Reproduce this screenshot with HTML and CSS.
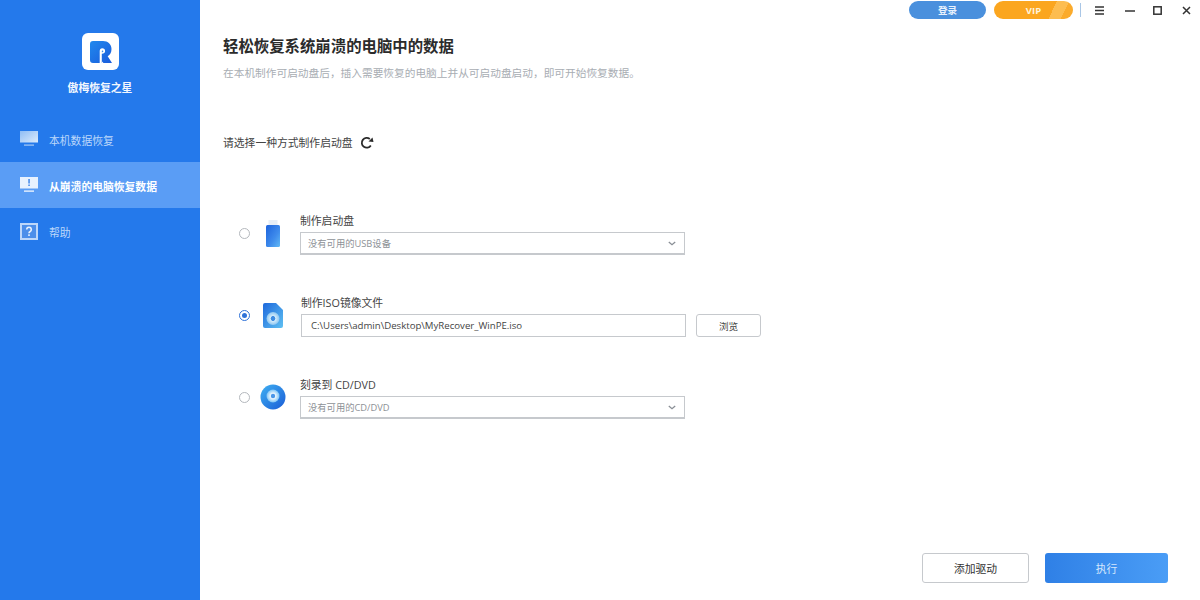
FILE: index.html
```html
<!DOCTYPE html>
<html lang="zh-CN">
<head>
<meta charset="utf-8">
<title>傲梅恢复之星</title>
<link rel="stylesheet" href="styles.css">
</head>
<body>
<div class="app">
  <aside class="sidebar">
    <div class="brand">
      <div class="logo">
        <svg width="37" height="37" viewBox="0 0 37 37">
          <defs><linearGradient id="lg" x1="0" y1="0" x2="1" y2="1"><stop offset="0" stop-color="#2089ee"/><stop offset="1" stop-color="#1a5cdc"/></linearGradient></defs>
          <rect width="37" height="37" rx="6" fill="#fff"/>
          <path d="M8 11a3 3 0 0 1 3-3h10c5 0 8.500 3.500 8.500 8 0 3.500-1.500 6-3.800 7.300L30 30H21.500L20 28.500V30H11a3 3 0 0 1-3-3Z" fill="url(#lg)"/>
          <path d="M17.700 30V18.200c0-1.800 1-3 2.600-3 1.700 0 2.800 1.100 2.800 2.700 0 1.700-1.200 2.800-3.300 2.800V30Z" fill="#fff"/>
          <path d="M19.800 18.800c0-.8.300-1.300 .8-1.300s.7 .4 .7 .9-.4 .8-1.500 .8Z" fill="#3b8de8"/>
        </svg>
      </div>
      <div class="brand-name">傲梅恢复之星</div>
    </div>
    <nav class="nav">
      <div class="nav-item">
        <svg class="nav-icon" width="18" height="16" viewBox="0 0 18 16"><defs><linearGradient id="m1" x1="0" y1="0" x2="1" y2="1"><stop offset="0" stop-color="#8fbdf5"/><stop offset="1" stop-color="#dcebfc"/></linearGradient></defs><rect y="0" width="18" height="11.500" fill="url(#m1)"/><rect x="4" y="13.500" width="10" height="1.200" fill="#a9cbf6"/></svg>
        <span>本机数据恢复</span>
      </div>
      <div class="nav-item active">
        <svg class="nav-icon" width="18" height="16" viewBox="0 0 18 16"><rect y="0" width="18" height="11.500" fill="#e8f2fe"/><rect x="8.300" y="2" width="1.500" height="4.500" fill="#3f86e8"/><rect x="8.300" y="7.500" width="1.500" height="1.500" fill="#3f86e8"/><rect x="4" y="13.500" width="10" height="1.200" fill="#fff"/></svg>
        <span>从崩溃的电脑恢复数据</span>
      </div>
      <div class="nav-item">
        <svg class="nav-icon" width="18" height="17" viewBox="0 0 18 17"><rect x="1" y="1" width="16" height="15" fill="#4c8fea" stroke="#bcd7fa" stroke-width="2"/><path d="M6.700 6.500a2.300 2.300 0 1 1 3.500 2c-.9 .5-1.200 1-1.200 1.800" fill="none" stroke="#e8f2fe" stroke-width="1.600"/><rect x="8.200" y="11.300" width="1.600" height="1.700" fill="#e8f2fe"/></svg>
        <span>帮助</span>
      </div>
    </nav>
  </aside>
  <main class="main">
    <div class="topbar">
      <button class="pill pill-login">登录</button>
      <button class="pill pill-vip">VIP</button>
      <span class="divider"></span>
      <svg class="win win-menu" width="11" height="9" viewBox="0 0 11 9"><path d="M1 1h9M1 4.500h9M1 8h9" stroke="#333" stroke-width="1.300"/></svg>
      <svg class="win win-min" width="10" height="9" viewBox="0 0 10 9"><path d="M0 5h10" stroke="#333" stroke-width="1.500"/></svg>
      <svg class="win win-max" width="9" height="9" viewBox="0 0 9 9"><rect x=".8" y=".8" width="7.400" height="7.400" fill="none" stroke="#333" stroke-width="1.500"/></svg>
      <svg class="win win-close" width="9" height="9" viewBox="0 0 9 9"><path d="M1 1l7 7M8 1l-7 7" stroke="#333" stroke-width="1.500"/></svg>
    </div>
    <h1 class="title">轻松恢复系统崩溃的电脑中的数据</h1>
    <p class="subtitle">在本机制作可启动盘后，插入需要恢复的电脑上并从可启动盘启动，即可开始恢复数据。</p>
    <div class="prompt">
      <span>请选择一种方式制作启动盘</span>
      <svg width="14" height="14" viewBox="0 0 14 14"><path d="M10.800 9.500A4.900 4.900 0 1 1 9.800 3" fill="none" stroke="#2b2b2b" stroke-width="1.800"/><path d="M8.500 5.500L13.500 6 12.500 1.500Z" fill="#2b2b2b"/></svg>
    </div>
    <div class="options">
      <div class="option option-usb">
        <span class="radio"></span>
        <div class="opt-icon">
          <svg width="14" height="27" viewBox="0 0 14 27"><defs><linearGradient id="u1" x1="0" y1="0" x2="1" y2="1"><stop offset="0" stop-color="#1c62dc"/><stop offset=".6" stop-color="#3f8cec"/><stop offset="1" stop-color="#62baf5"/></linearGradient></defs><rect x="2.500" y="0" width="9" height="6" fill="#e6eef7"/><rect x="0" y="5" width="14" height="22" rx="1.500" fill="url(#u1)"/></svg>
        </div>
        <div class="opt-body">
          <label class="opt-label">制作启动盘</label>
          <div class="field select"><span>没有可用的USB设备</span><svg width="8" height="5" viewBox="0 0 10 6"><path d="M1 1l4 3.500L9 1" fill="none" stroke="#8a8f96" stroke-width="1.600"/></svg></div>
        </div>
      </div>
      <div class="option option-iso">
        <span class="radio checked"></span>
        <div class="opt-icon">
          <svg width="20" height="25" viewBox="0 0 20 25"><defs><linearGradient id="i1" x1="0" y1="0" x2="1" y2="1"><stop offset="0" stop-color="#1d68dc"/><stop offset="1" stop-color="#5fc0f2"/></linearGradient><radialGradient id="i2"><stop offset=".35" stop-color="#3f8de2"/><stop offset=".4" stop-color="#d4ecfb"/><stop offset="1" stop-color="#8cc6f2"/></radialGradient></defs><path d="M2 0h11l7 7v16a2 2 0 0 1-2 2H2a2 2 0 0 1-2-2V2a2 2 0 0 1 2-2Z" fill="url(#i1)"/><circle cx="10" cy="15.500" r="6.500" fill="url(#i2)"/></svg>
        </div>
        <div class="opt-body">
          <label class="opt-label">制作ISO镜像文件</label>
          <div class="field-row">
            <div class="field path"><span>C:\Users\admin\Desktop\MyRecover_WinPE.iso</span></div>
            <button class="browse">浏览</button>
          </div>
        </div>
      </div>
      <div class="option option-cd">
        <span class="radio"></span>
        <div class="opt-icon">
          <svg width="26" height="26" viewBox="0 0 26 26"><defs><linearGradient id="c1" x1="0" y1="0" x2="1" y2="1"><stop offset="0" stop-color="#3fb0f2"/><stop offset="1" stop-color="#1a5cd6"/></linearGradient><radialGradient id="c2"><stop offset=".3" stop-color="#fff"/><stop offset="1" stop-color="#7cc4f6"/></radialGradient></defs><circle cx="13" cy="13" r="12.500" fill="url(#c1)"/><circle cx="13" cy="12" r="6.500" fill="url(#c2)"/><circle cx="13" cy="12" r="2.200" fill="#4b97e8"/></svg>
        </div>
        <div class="opt-body">
          <label class="opt-label">刻录到 CD/DVD</label>
          <div class="field select"><span>没有可用的CD/DVD</span><svg width="8" height="5" viewBox="0 0 10 6"><path d="M1 1l4 3.500L9 1" fill="none" stroke="#8a8f96" stroke-width="1.600"/></svg></div>
        </div>
      </div>
    </div>
    <div class="actions">
      <button class="btn btn-ghost">添加驱动</button>
      <button class="btn btn-primary">执行</button>
    </div>
  </main>
</div>
</body>
</html>
```
FILE: styles.css
```css
* { box-sizing: border-box; }
html, body { margin: 0; height: 100%; }
body {
  font-family: "Open Sans", "Noto Sans CJK SC", sans-serif;
  font-size: 10.8px;
  color: #333;
  background: #fff;
  overflow: hidden;
}
.app { display: flex; width: 1200px; height: 600px; }

.sidebar { width: 200px; flex: none; background: #2479eb; color: #fff; }
.brand { display: flex; flex-direction: column; align-items: center; padding-top: 33px; }
.logo { height: 37px; }
.logo svg { display: block; }
.brand-name { margin-top: 11px; font-weight: 700; line-height: 14px; color: #f2f7fe; }
.nav { margin-top: 21px; }
.nav-item {
  display: flex; align-items: center; gap: 11px;
  height: 46px; padding-left: 20px; color: #bcd7fa;
}
.nav-item span { position: relative; top: 1px; }
.nav-item.active { background: #5a9df5; color: #fff; font-weight: 700; }
.nav-icon { flex: none; }

.main { flex: 1; display: flex; flex-direction: column; padding-left: 23px; min-width: 0; }
.topbar { display: flex; align-items: center; height: 20px; padding-left: 686px; }
.pill {
  height: 18px; border: 0; border-radius: 9px; padding: 0; margin: 0;
  font: 700 9.5px "Open Sans", "Noto Sans CJK SC", sans-serif; color: #e8f2fe;
}
.pill-login { width: 77px; background: #4a90dd; }
.pill-vip { width: 79px; margin-left: 8px; background: linear-gradient(115deg, #fba61f 0 72%, #fdbd50 72% 86%, #fbab2c 86%); color: #fff3da; }
.divider { width: 1px; height: 14px; margin-left: 7px; background: #a9c6e6; }
.win { flex: none; display: block; }
.win-menu { margin-left: 13px; }
.win-min { margin-left: 20px; }
.win-max { margin-left: 18px; }
.win-close { margin-left: 20px; }

.title { margin: 17px 0 0; font-size: 15.4px; line-height: 20px; font-weight: 700; color: #2b2b2b; }
.subtitle { margin: 9px 0 0; font-size: 10.7px; line-height: 14px; color: #a8adb3; }
.prompt { display: flex; align-items: center; gap: 7px; margin-top: 56px; line-height: 14px; color: #444; }
.prompt svg { display: block; }

.options { display: flex; flex-direction: column; margin-top: 64px; padding-left: 16px; gap: 41px; }
.option { display: flex; align-items: flex-start; }
.radio {
  flex: none; width: 11px; height: 11px; margin-top: 13.500px; border: 1px solid #b4b8bd; border-radius: 50%; background: #fff;
  display: flex; align-items: center; justify-content: center;
}
.radio.checked { border-color: #2f72d8; }
.radio.checked::after { content: ""; width: 5px; height: 5px; border-radius: 50%; background: #2f72d8; }
.opt-icon { flex: none; width: 28px; height: 28px; margin: 5px 0 0 9px; display: flex; align-items: center; justify-content: center; }
.opt-icon svg { display: block; }
.opt-body { margin-left: 13px; }
.option-iso .opt-body { margin-left: 14px; }
.opt-label { display: block; height: 14px; line-height: 14px; color: #444; }
.field {
  display: flex; align-items: center; margin-top: 4px; height: 23px; width: 385px;
  border: 1px solid #c6c9cd; background: #fff; font-size: 9.300px; color: #8d9196;
}
.select { justify-content: space-between; padding: 0 8px 0 7px; border-width: 1px 1px 2px 1px; }
.path { padding-left: 9px; color: #444; font-size: 9.650px; }
.field-row { display: flex; align-items: flex-start; gap: 10px; }
.browse {
  margin-top: 4px; width: 65px; height: 23px; padding: 0; background: #fff;
  border: 1px solid #c6c9cd; border-radius: 3px;
  font: 9.600px "Open Sans", "Noto Sans CJK SC", sans-serif; color: #444;
}
.actions { margin-top: auto; margin-bottom: 17px; display: flex; justify-content: flex-end; gap: 16px; padding-right: 32px; }
.btn { height: 30px; padding: 0; border-radius: 3px; font: 10.8px "Open Sans", "Noto Sans CJK SC", sans-serif; }
.btn-ghost { width: 107px; background: #fff; border: 1px solid #c6c9cd; color: #333; }
.btn-primary { width: 123px; border: 0; background: linear-gradient(90deg, #2f80e6, #4a9df6); color: #d5e7fd; }
```
